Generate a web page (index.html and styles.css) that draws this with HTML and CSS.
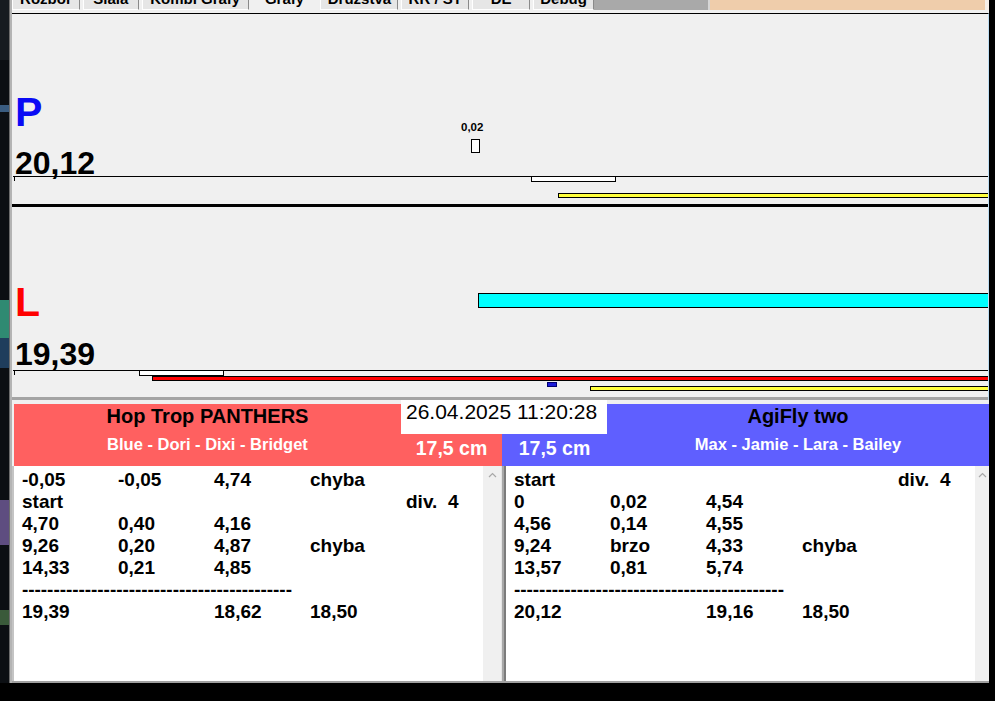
FILE: index.html
```html
<!DOCTYPE html>
<html lang="cs">
<head>
<meta charset="utf-8">
<title>Grafy</title>
<link rel="stylesheet" href="styles.css">
</head>
<body>
<div class="screen">
  <div class="main">
    <div class="desk"></div>
    <div class="app">
      <div class="tabbar">
        <div class="tabs">
          <div class="tab t1"><span>Rozbor</span></div>
          <div class="tab t2"><span>Siala</span></div>
          <div class="tab t3"><span>Kombi Grafy</span></div>
          <div class="tab t4 sel"><span>Grafy</span></div>
          <div class="tab t5"><span>Družstva</span></div>
          <div class="tab t6"><span>RR / ST</span></div>
          <div class="tab t7"><span>DE</span></div>
          <div class="tab t8"><span>Debug</span></div>
        </div>
        <div class="tabgray"></div>
        <div class="tabpeach"></div>
      </div>
      <div class="tabbody"></div>

      <div class="canvas">
        <div class="lane lane-p">
          <div class="letter letter-p">P</div>
          <div class="time">20,12</div>
          <div class="track"></div>
          <span class="flag" style="left:449px;top:107px">0,02</span>
          <span class="bar white" style="left:459px;top:125px;width:9px;height:14px"></span>
          <span class="tick" style="left:2px;top:162px"></span>
          <span class="bar white" style="left:519px;top:162px;width:85px;height:6px"></span>
          <span class="bar yellow" style="left:546px;top:179px;width:440px;height:5px"></span>
        </div>
        <div class="lane lane-l">
          <div class="letter letter-l">L</div>
          <div class="time">19,39</div>
          <div class="track"></div>
          <span class="bar cyan" style="left:466px;top:86px;width:520px;height:15px"></span>
          <span class="tick" style="left:2px;top:163px"></span>
          <span class="bar white" style="left:127px;top:163px;width:85px;height:6px"></span>
          <span class="bar red" style="left:140px;top:169px;width:850px;height:5px"></span>
          <span class="bar navy" style="left:535px;top:175px;width:10px;height:5px"></span>
          <span class="bar yellow" style="left:578px;top:179px;width:410px;height:5px"></span>
        </div>
      </div>

      <div class="heads">
        <div class="name name-left">
          <div class="team">Hop Trop PANTHERS</div>
          <div class="dogs">Blue - Dori - Dixi - Bridget</div>
        </div>
        <div class="center">
          <div class="date">26.04.2025 11:20:28</div>
          <div class="heights">
            <div class="hgt hgt-r">17,5 cm</div>
            <div class="hgt hgt-b">17,5 cm</div>
          </div>
        </div>
        <div class="name name-right">
          <div class="team">AgiFly two</div>
          <div class="dogs">Max - Jamie - Lara - Bailey</div>
        </div>
      </div>

      <div class="lists">
        <div class="rows rows-left">
          <div class="row"><span>-0,05</span><span>-0,05</span><span>4,74</span><span>chyba</span><span></span></div>
          <div class="row"><span>start</span><span></span><span></span><span></span><span>div.  4</span></div>
          <div class="row"><span>4,70</span><span>0,40</span><span>4,16</span><span></span><span></span></div>
          <div class="row"><span>9,26</span><span>0,20</span><span>4,87</span><span>chyba</span><span></span></div>
          <div class="row"><span>14,33</span><span>0,21</span><span>4,85</span><span></span><span></span></div>
          <div class="row"><span class="dash">-------------------------------------------</span></div>
          <div class="row"><span>19,39</span><span></span><span>18,62</span><span>18,50</span><span></span></div>
        </div>
        <div class="sbar sbar-left">
          <svg width="9" height="6" viewBox="0 0 9 6"><polyline points="1,5 4.5,1.5 8,5" fill="none" stroke="#a8a8a8" stroke-width="1.2"/></svg>
        </div>
        <div class="splitter"></div>
        <div class="rows rows-right">
          <div class="row"><span>start</span><span></span><span></span><span></span><span>div.  4</span></div>
          <div class="row"><span>0</span><span>0,02</span><span>4,54</span><span></span><span></span></div>
          <div class="row"><span>4,56</span><span>0,14</span><span>4,55</span><span></span><span></span></div>
          <div class="row"><span>9,24</span><span>brzo</span><span>4,33</span><span>chyba</span><span></span></div>
          <div class="row"><span>13,57</span><span>0,81</span><span>5,74</span><span></span><span></span></div>
          <div class="row"><span class="dash">-------------------------------------------</span></div>
          <div class="row"><span>20,12</span><span></span><span>19,16</span><span>18,50</span><span></span></div>
        </div>
        <div class="sbar sbar-right">
          <svg width="9" height="6" viewBox="0 0 9 6"><polyline points="1,5 4.5,1.5 8,5" fill="none" stroke="#a8a8a8" stroke-width="1.2"/></svg>
        </div>
      </div>
    </div>
    <div class="edge"></div>
  </div>
  <div class="bottom"></div>
</div>
</body>
</html>
```
FILE: styles.css
```css
* { box-sizing: border-box; }

body {
  margin: 0;
  background: #000;
  font-family: "Liberation Sans", Arial, sans-serif;
  color: #000;
}

.screen {
  width: 995px;
  height: 701px;
  display: flex;
  flex-direction: column;
  background: #000;
  overflow: hidden;
}

.main {
  height: 683px;
  display: flex;
}

.desk {
  width: 10px;
  border-right: 1px solid #6c6c6c;
  background: linear-gradient(to bottom,
    #161b20 0 60px,
    #0c0f13 60px 105px,
    #3a5c80 105px 112px,
    #0c0f13 112px 300px,
    #2f8a72 300px 338px,
    #1f3d5c 338px 368px,
    #0c0f13 368px 500px,
    #5e4d80 500px 545px,
    #0c0f13 545px 610px,
    #3a5a3a 610px 625px,
    #0c0f13 625px);
}

.app {
  width: 979px;
  border-left: 2px solid #b4b4b4;
  display: flex;
  flex-direction: column;
  background: #f0f0f0;
}

.edge {
  width: 6px;
  background: #000;
}

.bottom {
  height: 18px;
  background: #000;
}

/* tabs */
.tabbar {
  height: 10px;
  display: flex;
  background: #f0f0f0;
  overflow: hidden;
}

.tabs {
  display: flex;
  gap: 3px;
  width: 582px;
}

.tab {
  height: 10px;
  background: #e6e6e6;
  border-left: 1px solid #ffffff;
  border-right: 1px solid #8a8a8a;
  border-bottom: 1px solid #ffffff;
  font-weight: bold;
  font-size: 15px;
  line-height: 15px;
  text-align: center;
  overflow: hidden;
  white-space: nowrap;
}

.tab span {
  display: block;
  margin-top: -9px;
}

.tab.sel {
  background: #f0f0f0;
  border: none;
}

.t1 { width: 68px; }
.t2 { width: 56px; }
.t3 { width: 107px; }
.t4 { width: 66px; }
.t5 { width: 78px; }
.t6 { width: 68px; }
.t7 { width: 58px; }
.t8 { width: 61px; }

.tabgray {
  width: 114px;
  background: #a9a9a9;
}

.tabpeach {
  flex: 1;
  background: #efcdab;
  border-left: 2px solid #d6d6d6;
  border-right: 4px solid #f6efe8;
}

.tabbody {
  height: 3px;
  background: #f0f0f0;
}

/* canvas */
.canvas {
  border-top: 1px solid #000;
  background: #f0f0f0;
  border-right: 1px solid #bcdcf2;
}

.lane {
  position: relative;
  height: 193px;
  overflow: hidden;
  padding-left: 3px;
}

.lane-p {
  padding-top: 78px;
  border-bottom: 3px solid #000;
}

.lane-l {
  padding-top: 75px;
  border-bottom: 3px solid #a4a4a4;
}

.letter {
  font-weight: bold;
  font-size: 41px;
  line-height: 41px;
}

.letter-p { color: #0a0af5; }
.letter-l { color: #ff0000; }

.time {
  font-weight: bold;
  font-size: 32px;
  line-height: 25px;
}

.lane-p .time { margin-top: 18px; }
.lane-l .time { margin-top: 19px; }

.track {
  border-top: 1px solid #000;
  margin-left: -2px;
}

.lane-l .track { margin-top: 3px; }

.flag {
  position: absolute;
  font-weight: bold;
  font-size: 11.5px;
  line-height: 13px;
}

.tick {
  position: absolute;
  width: 1px;
  height: 5px;
  background: #000;
}

.bar {
  position: absolute;
  border: 1px solid #000;
}

.white { background: #ffffff; }
.yellow { background: #ffff3c; }
.cyan { background: #00ffff; }
.red { background: #ff0000; }
.navy { background: #1c1cd8; border-color: #000070; }

/* headers */
.heads {
  height: 66px;
  display: flex;
  padding-left: 2px;
  background: #f0f0f0;
}

.name {
  margin-top: 4px;
  text-align: center;
  white-space: nowrap;
}

.name-left {
  width: 387px;
  background: #ff6060;
}

.name-right {
  flex: 1;
  background: #5f5fff;
}

.team {
  font-weight: bold;
  font-size: 20px;
  line-height: 24px;
  color: #000;
}

.dogs {
  margin-top: 6px;
  font-weight: bold;
  font-size: 16.5px;
  line-height: 20px;
  color: #ffffff;
}

.center {
  width: 206px;
  display: flex;
  flex-direction: column;
}

.date {
  height: 34px;
  background: #ffffff;
  padding-left: 5px;
  font-size: 21px;
  line-height: 24px;
  white-space: nowrap;
}

.heights {
  flex: 1;
  display: flex;
}

.hgt {
  padding-top: 3px;
  font-weight: bold;
  font-size: 19.5px;
  line-height: 22px;
  color: #ffffff;
  text-align: center;
  white-space: nowrap;
}

.hgt-r {
  width: 101px;
  background: #ff6060;
}

.hgt-b {
  flex: 1;
  background: #5f5fff;
}

/* lists */
.lists {
  flex: 1;
  display: flex;
  border-bottom: 2px solid #a0a0a0;
}

.rows {
  width: 469px;
  background: #ffffff;
  padding: 3px 0 0 8px;
}

.rows-left {
  border-left: 2px solid #c4c4c4;
  width: 471px;
}

.row {
  display: grid;
  grid-template-columns: repeat(5, 96px);
  height: 22px;
  font-weight: bold;
  font-size: 19px;
  line-height: 22px;
  white-space: pre;
}

.dash {
  grid-column: 1 / 6;
  letter-spacing: -0.05px;
}

.sbar {
  background: #f0f0f0;
  display: flex;
  justify-content: center;
  align-items: flex-start;
  padding-top: 6px;
}

.sbar-left { width: 18px; }
.sbar-right { width: 14px; }

.splitter {
  width: 5px;
  background: linear-gradient(to right, #e4e4e4 0 1px, #a8a8a8 1px 3px, #7c7c7c 3px 5px);
}
```
